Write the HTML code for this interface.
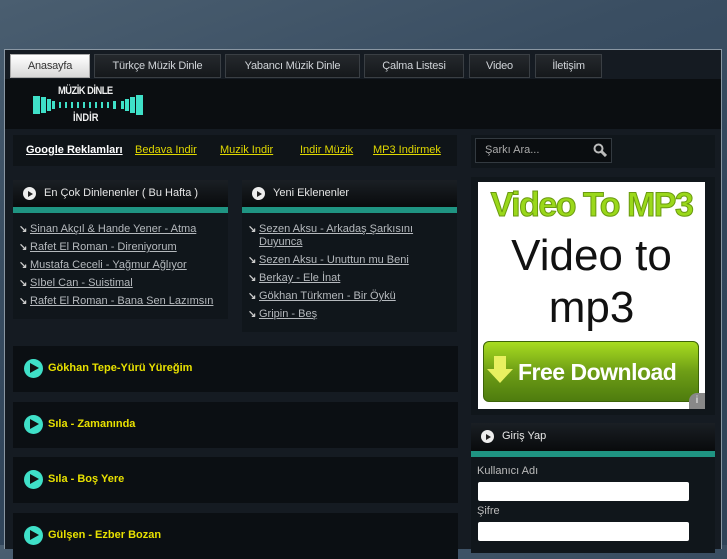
<!DOCTYPE html>
<html><head><meta charset="utf-8"><style>
*{margin:0;padding:0;box-sizing:border-box}
body{width:727px;height:545px;overflow:hidden;background:linear-gradient(160deg,#4a5e70 0%,#3a4e62 30%,#31455a 60%,#2f4357 100%);font-family:"Liberation Sans",sans-serif;position:relative}
.c{position:absolute;left:4px;top:49px;width:718px;height:500px;background:#151b22;border:1px solid #8a97a3;border-bottom:none}
.a{position:absolute}
.tab{position:absolute;top:4px;height:24px;background:linear-gradient(#25292d,#15181b);border:1px solid #3a3f44;color:#d0d4d8;font-size:11px;line-height:22px;text-align:center;letter-spacing:-0.2px}
.tab.on{background:linear-gradient(#fff,#d8d8d8);color:#333;border-color:#aaa}
.hdr{position:absolute;left:0;top:29px;width:716px;height:50px;background:#0b0e11}
.box{background:#10161b}
.bh{position:absolute;left:0;top:0;right:0;height:33px;background:linear-gradient(#1a1f24,#050607);color:#e6e6e6;font-size:11px;line-height:26px;padding-left:31px}
.bh:after{content:"";position:absolute;left:0;right:0;bottom:0;height:6px;background:#1f9482}
.pl{position:absolute;left:10px;top:7px;width:13px;height:13px;border-radius:50%;background:#eee}
.pl:after{content:"";position:absolute;left:5px;top:3.5px;border-left:5px solid #222;border-top:3px solid transparent;border-bottom:3px solid transparent}
ul{list-style:none;position:absolute;left:6px;top:43px;font-size:11px;color:#b5b9bd}
li{margin-bottom:5px;padding-left:11px;position:relative;line-height:13px}
li u{text-decoration:underline}
li:before{content:"↘";position:absolute;left:0;top:0;font-size:10px;color:#ccc;font-weight:bold}
.song{position:absolute;left:8px;width:445px;height:46px;background:#0b0f13;color:#e8e100;font-weight:bold;font-size:11px;line-height:44px;padding-left:35px}
.song i{position:absolute;left:11px;top:13px;width:19px;height:19px;border-radius:50%;background:#3fe0c8}
.song i:after{content:"";position:absolute;left:6px;top:4px;border-left:9px solid #111;border-top:5.5px solid transparent;border-bottom:5.5px solid transparent}
.ad a{color:#e0d800;font-size:11px;position:absolute;top:9px;text-decoration:underline}
</style></head><body>
<div class="c">
<div class="tab on" style="left:5px;width:80px">Anasayfa</div>
<div class="tab" style="left:89px;width:127px">Türkçe Müzik Dinle</div>
<div class="tab" style="left:220px;width:135px">Yabancı Müzik Dinle</div>
<div class="tab" style="left:359px;width:100px">Çalma Listesi</div>
<div class="tab" style="left:464px;width:61px">Video</div>
<div class="tab" style="left:530px;width:67px">İletişim</div>
<div class="hdr">
 <div class="a" style="left:28px;top:13px">
  <svg width="112" height="26"><g fill="#3fe0c8"><rect x="0" y="4" width="7" height="18"/><rect x="8" y="5" width="5" height="16"/><rect x="14" y="7" width="4" height="12"/><rect x="19" y="9" width="3" height="8"/><rect x="103" y="3" width="7" height="20"/><rect x="97" y="5" width="5" height="16"/><rect x="92" y="7" width="4" height="12"/><rect x="88" y="9" width="3" height="8"/><rect x="26" y="10" width="2" height="6"/><rect x="32" y="10" width="2" height="6"/><rect x="38" y="10" width="2" height="6"/><rect x="44" y="10" width="2" height="6"/><rect x="50" y="10" width="2" height="6"/><rect x="56" y="10" width="2" height="6"/><rect x="62" y="10" width="2" height="6"/><rect x="68" y="10" width="2" height="6"/><rect x="74" y="10" width="2" height="6"/><rect x="80" y="9" width="3" height="8"/></g></svg>
 </div>
 <div class="a" style="left:53px;top:6px;color:#eee;font-weight:bold;font-size:11px;letter-spacing:-0.6px;transform:scaleX(.85);transform-origin:left">MÜZİK DİNLE</div>
 <div class="a" style="left:68px;top:33px;color:#eee;font-weight:bold;font-size:11px;transform:scaleX(.85);transform-origin:left">İNDİR</div>
</div>
<div class="a ad" style="left:8px;top:85px;width:444px;height:31px;background:#0f1418">
 <a style="left:13px;color:#fff;font-weight:bold">Google Reklamları</a>
 <a style="left:122px">Bedava Indir</a>
 <a style="left:207px">Muzik Indir</a>
 <a style="left:287px">Indir Müzik</a>
 <a style="left:360px">MP3 Indirmek</a>
</div>
<div class="a box" style="left:8px;top:130px;width:215px;height:139px">
 <div class="bh"><span class="pl"></span>En Çok Dinlenenler ( Bu Hafta )</div>
 <ul><li><u>Sinan Akçıl &amp; Hande Yener - Atma</u></li><li><u>Rafet El Roman - Direniyorum</u></li><li><u>Mustafa Ceceli - Yağmur Ağlıyor</u></li><li><u>SIbel Can - Suistimal</u></li><li><u>Rafet El Roman - Bana Sen Lazımsın</u></li></ul>
</div>
<div class="a box" style="left:237px;top:130px;width:215px;height:152px">
 <div class="bh"><span class="pl"></span>Yeni Eklenenler</div>
 <ul><li><u>Sezen Aksu - Arkadaş Şarkısını Duyunca</u></li><li><u>Sezen Aksu - Unuttun mu Beni</u></li><li><u>Berkay - Ele İnat</u></li><li><u>Gökhan Türkmen - Bir Öykü</u></li><li><u>Gripin - Beş</u></li></ul>
</div>
<div class="song" style="top:296px"><i></i>Gökhan Tepe-Yürü Yüreğim</div>
<div class="song" style="top:352px"><i></i>Sıla - Zamanında</div>
<div class="song" style="top:407px"><i></i>Sıla - Boş Yere</div>
<div class="song" style="top:463px"><i></i>Gülşen - Ezber Bozan</div>
<div class="a" style="left:466px;top:85px;width:244px;height:33px;background:#10161b">
 <div class="a" style="left:4px;top:3px;width:137px;height:25px;background:#0a0d10;border:1px solid #333a40;color:#aaa;font-size:11px;line-height:23px;padding-left:9px">Şarkı Ara...
  <svg class="a" style="right:4px;top:4px" width="14" height="14"><circle cx="5.5" cy="5.5" r="4" stroke="#bbb" stroke-width="2" fill="none"/><line x1="8.5" y1="8.5" x2="13" y2="13" stroke="#bbb" stroke-width="3"/></svg></div>
</div>
<div class="a" style="left:466px;top:127px;width:244px;height:238px;background:#10161b">
 <div class="a" style="left:7px;top:5px;width:227px;height:227px;background:#fff;overflow:hidden">
  <div class="a" style="left:0;top:4px;width:227px;text-align:center;font-weight:bold;font-size:34px;color:#9ad81a;-webkit-text-stroke:1px #6a9a10;letter-spacing:-1.5px;white-space:nowrap">Video To MP3</div>
  <div class="a" style="left:0;top:48px;width:227px;text-align:center;font-size:44px;line-height:52px;color:#111">Video to<br>mp3</div>
  <div class="a" style="left:5px;top:159px;width:216px;height:61px;border-radius:6px;background:linear-gradient(#a8dc20,#6e9e16 50%,#4e7c0e);border:1px solid #3d6408;color:#fff;font-weight:bold;font-size:23px;line-height:60px;padding-left:34px;white-space:nowrap;letter-spacing:-0.5px">Free Download
   <div class="a" style="left:3px;top:27px;width:0;height:0;border-left:13px solid transparent;border-right:13px solid transparent;border-top:14px solid #e8f060"></div>
   <div class="a" style="left:10px;top:14px;width:12px;height:14px;background:#e8f060"></div>
  </div>
  <div class="a" style="right:0;bottom:0;width:16px;height:16px;background:#888;border-radius:8px 0 0 0;color:#fff;font-size:10px;text-align:center;line-height:16px">i</div>
 </div>
</div>
<div class="a" style="left:466px;top:373px;width:244px;height:130px;background:#10161b">
 <div class="bh" style="height:34px;line-height:27px"><span class="pl"></span>Giriş Yap</div>
 <div class="a" style="left:6px;top:42px;color:#bbb;font-size:11px">Kullanıcı Adı</div>
 <div class="a" style="left:7px;top:59px;width:211px;height:19px;background:#fff;border-radius:2px"></div>
 <div class="a" style="left:6px;top:82px;color:#bbb;font-size:11px">Şifre</div>
 <div class="a" style="left:7px;top:99px;width:211px;height:19px;background:#fff;border-radius:2px"></div>
</div>
</div>
</body></html>
